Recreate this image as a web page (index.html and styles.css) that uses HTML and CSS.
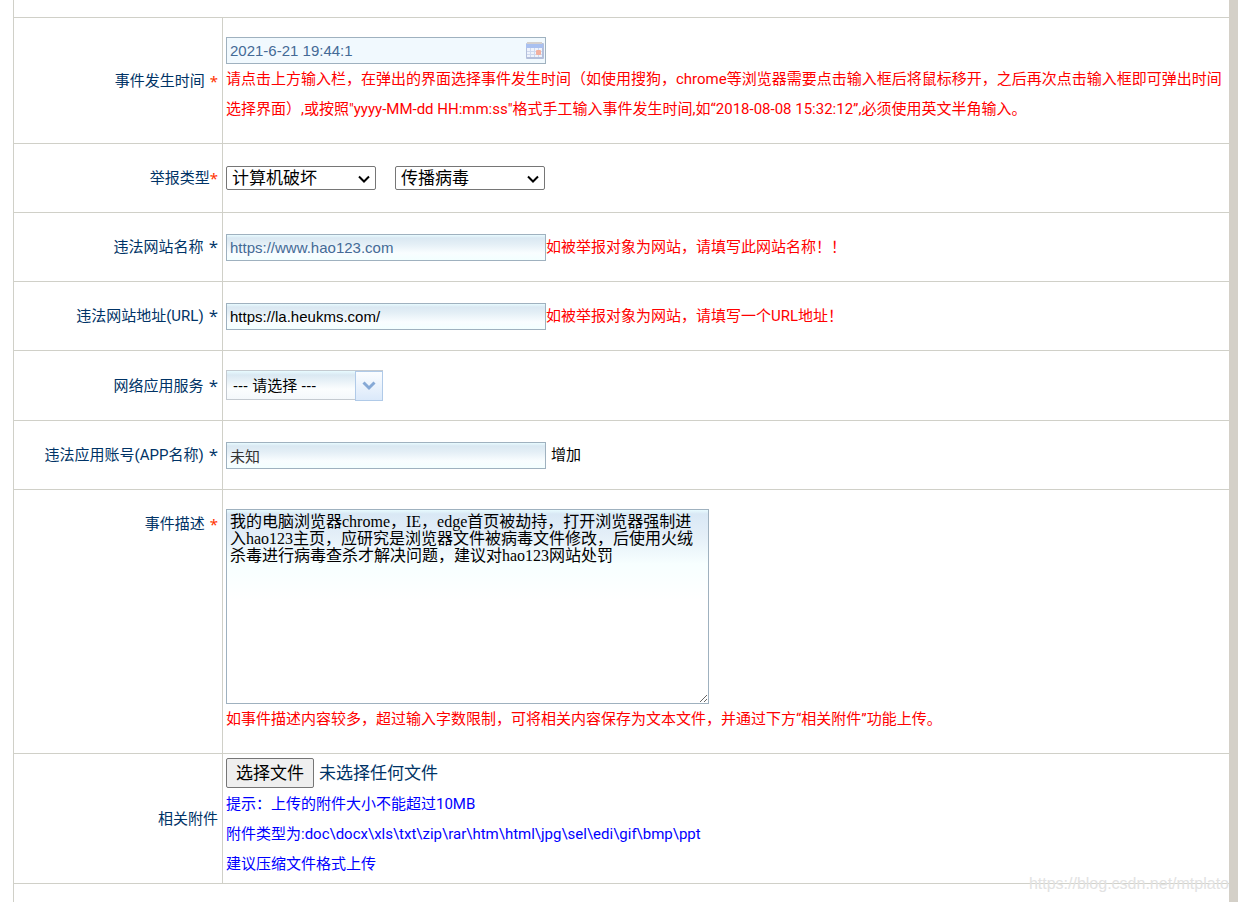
FILE: index.html
```html
<!DOCTYPE html>
<html lang="zh-CN">
<head>
<meta charset="utf-8">
<meta name="viewport" content="width=device-width, initial-scale=1">
<title>举报信息</title>
<link rel="stylesheet" href="styles.css">
</head>
<body>
<form class="report">
  <div class="spacer"></div>

  <div class="row">
    <div class="name"><label for="time">事件发生时间</label><span class="required">*</span></div>
    <div class="field stack">
      <div class="date-box">
        <input class="text date" id="time" type="text" value="2021-6-21 19:44:1">
        <svg class="calendar" viewBox="0 0 18 17" aria-hidden="true">
          <rect x="0" y="1" width="18" height="16" rx="1" fill="#b4bfdb"/>
          <rect x="1" y="0" width="15" height="2" fill="#d3cfce"/>
          <rect x="0" y="2" width="17" height="4" fill="#a9c0f0"/>
          <rect x="1" y="6" width="15" height="9" fill="#eff3fc"/>
          <path d="M4.500 6v9M8.500 6v9M12.500 6v9M1 9.500h15M1 12.500h15" stroke="#ced8ee" fill="none"/>
          <rect x="10" y="8" width="5" height="5" rx="1" fill="#f3b09f"/>
        </svg>
      </div>
      <p class="hint">请点击上方输入栏，在弹出的界面选择事件发生时间（如使用搜狗，chrome等浏览器需要点击输入框后将鼠标移开，之后再次点击输入框即可弹出时间选择界面）,或按照"yyyy-MM-dd HH:mm:ss"格式手工输入事件发生时间,如“2018-08-08 15:32:12”,必须使用英文半角输入。</p>
    </div>
  </div>

  <div class="row">
    <div class="name tight"><label for="type">举报类型</label><span class="required">*</span></div>
    <div class="field selects">
      <div class="pick-box">
        <select class="pick" id="type"><option>计算机破坏</option></select>
        <svg class="chevron" viewBox="0 0 12 8" aria-hidden="true"><path d="M1 1.500L6 6.500L11 1.500" fill="none" stroke="#000" stroke-width="2"/></svg>
      </div>
      <div class="pick-box">
        <select class="pick" aria-label="举报子类型"><option>传播病毒</option></select>
        <svg class="chevron" viewBox="0 0 12 8" aria-hidden="true"><path d="M1 1.500L6 6.500L11 1.500" fill="none" stroke="#000" stroke-width="2"/></svg>
      </div>
    </div>
  </div>

  <div class="row">
    <div class="name"><label for="site">违法网站名称</label><span class="star">*</span></div>
    <div class="field">
      <input class="text muted" id="site" type="text" value="https://www.hao123.com">
      <span class="hint">如被举报对象为网站，请填写此网站名称！！</span>
    </div>
  </div>

  <div class="row">
    <div class="name"><label for="url">违法网站地址(URL)</label><span class="star">*</span></div>
    <div class="field">
      <input class="text" id="url" type="text" value="https://la.heukms.com/">
      <span class="hint">如被举报对象为网站，请填写一个URL地址！</span>
    </div>
  </div>

  <div class="row">
    <div class="name"><label for="service">网络应用服务</label><span class="star">*</span></div>
    <div class="field">
      <div class="combo">
        <select class="combo-select" id="service"><option>--- 请选择 ---</option></select>
        <span class="combo-arrow"><svg viewBox="0 0 14 10" aria-hidden="true"><path d="M1.500 1.500L7 7L12.500 1.500" fill="none" stroke="#86a9d6" stroke-width="3"/></svg></span>
      </div>
    </div>
  </div>

  <div class="row">
    <div class="name"><label for="account">违法应用账号(APP名称)</label><span class="star">*</span></div>
    <div class="field">
      <input class="text dark" id="account" type="text" value="未知">
      <button class="add" type="button">增加</button>
    </div>
  </div>

  <div class="row">
    <div class="name top"><label for="detail">事件描述</label><span class="required">*</span></div>
    <div class="field stack">
      <textarea class="detail" id="detail" spellcheck="false">我的电脑浏览器chrome，IE，edge首页被劫持，打开浏览器强制进入hao123主页，应研究是浏览器文件被病毒文件修改，后使用火绒杀毒进行病毒查杀才解决问题，建议对hao123网站处罚</textarea>
      <p class="hint">如事件描述内容较多，超过输入字数限制，可将相关内容保存为文本文件，并通过下方“相关附件”功能上传。</p>
    </div>
  </div>

  <div class="row">
    <div class="name"><label for="file">相关附件</label></div>
    <div class="field stack files">
      <div class="file-line">
        <input class="file-input" id="file" type="file">
        <label class="file-button" for="file">选择文件</label>
        <span class="file-name">未选择任何文件</span>
      </div>
      <div class="tips">
        <p>提示：上传的附件大小不能超过10MB</p>
        <p>附件类型为:doc\docx\xls\txt\zip\rar\htm\html\jpg\sel\edi\gif\bmp\ppt</p>
        <p>建议压缩文件格式上传</p>
      </div>
    </div>
  </div>
</form>
<div class="watermark">https://blog.csdn.net/mtplato</div>
</body>
</html>
```
FILE: styles.css
```css
* {
  box-sizing: border-box;
}

body {
  margin: 0;
  min-height: 100vh;
  display: flex;
  position: relative;
  padding-left: 13px;
  border-right: 9px solid #d4d0c8;
  background: #fff;
  color: #003366;
  font: 15px/30px Roboto, "Noto Sans CJK SC", sans-serif;
}

p {
  margin: 0;
}

.report {
  flex: 1;
  border-left: 1px solid #d0d0c8;
}

.spacer {
  height: 18px;
  border-bottom: 1px solid #d0d0c8;
}

.row {
  display: grid;
  grid-template-columns: 209px 1fr;
  border-bottom: 1px solid #d0d0c8;
}

.name {
  display: flex;
  align-items: center;
  justify-content: flex-end;
  gap: 5px;
  padding: 19px 4px 19px 0;
  border-right: 1px solid #d0d0c8;
}

.name.tight {
  gap: 0;
}

.name.top {
  align-items: flex-start;
}

.required {
  color: #ff3300;
  font-family: "Noto Sans", sans-serif;
}

.star {
  font-family: "Open Sans", sans-serif;
  font-size: 17px;
}

.field {
  display: flex;
  align-items: center;
  padding: 19px 3px;
}

.field.stack {
  flex-direction: column;
  align-items: flex-start;
}

.hint {
  color: #f00;
}

.text {
  width: 320px;
  height: 27px;
  padding: 0 3px;
  border: 1px solid #9fb1bf;
  border-radius: 0;
  background: linear-gradient(#e8fbff, #dae8f2 3px, #e4eff6 9px, #f9fdff 18px, #f3ffff);
  color: #000;
  font: 15px "Liberation Sans", "Noto Sans CJK SC", sans-serif;
}

.text.date {
  display: block;
  background: #f1f9fe;
  color: #446a96;
}

.text.muted {
  color: #446a96;
}

.text.dark {
  color: #333;
}

.date-box {
  position: relative;
}

.calendar {
  position: absolute;
  top: 5px;
  right: 2px;
  width: 18px;
  height: 17px;
}

.selects {
  gap: 19px;
}

.pick-box {
  position: relative;
  width: 150px;
  height: 24px;
}

.pick {
  display: block;
  width: 100%;
  height: 24px;
  padding: 0 24px 0 5px;
  appearance: none;
  border: 1px solid #767676;
  border-radius: 2px;
  background-color: #fff;
  color: #000;
  font: 17px/22px Roboto, "Noto Sans CJK SC", sans-serif;
}

.chevron {
  position: absolute;
  top: 9px;
  right: 6px;
  width: 12px;
  height: 8px;
  pointer-events: none;
}

.combo {
  position: relative;
  width: 157px;
  height: 31px;
}

.combo-select {
  display: block;
  width: 100%;
  height: 30px;
  padding: 0 30px 0 6px;
  appearance: none;
  border: 1px solid #c4cad0;
  border-right: 0;
  border-radius: 0;
  background: linear-gradient(#e8fbff, #dae8f2 4px, #e8f1f7 10px, #fbfdfe 18px, #f4f8fb);
  color: #000;
  font: 15px "Liberation Sans", "Noto Sans CJK SC", sans-serif;
}

.combo-arrow {
  position: absolute;
  top: 1px;
  right: 0;
  bottom: 0;
  width: 28px;
  display: flex;
  align-items: center;
  justify-content: center;
  border: 1px solid #b0cae8;
  background: linear-gradient(#fbfdff, #dbe9fa);
  pointer-events: none;
}

.combo-arrow svg {
  width: 14px;
  height: 10px;
}

.add {
  padding: 0 5px;
  border: 0;
  background: none;
  color: #000;
  font: inherit;
}

.detail {
  display: block;
  width: 483px;
  max-width: 100%;
  height: 195px;
  padding: 3px;
  border: 1px solid #9fb1bf;
  background: linear-gradient(#e8fbff, #d9e8f5 4px, #e4eff8 26px, #f7ffff 54px, #fff 90px);
  color: #000;
  font: 16px/17px "Liberation Serif", "Noto Sans CJK SC", serif;
}

.files {
  gap: 1px;
  padding: 4px 3px;
}

.file-line {
  position: relative;
  display: flex;
  gap: 5px;
  font-size: 17px;
}

.file-input {
  position: absolute;
  width: 87px;
  height: 30px;
  opacity: 0;
}

.file-button {
  height: 30px;
  padding: 0 9px;
  border: 1px solid #767676;
  border-radius: 2px;
  background: #efefef;
  color: #000;
  line-height: 28px;
}

.tips {
  color: #00f;
}

.watermark {
  position: absolute;
  right: 0;
  bottom: 8px;
  color: #e2e2e2;
  font: 16px/20px "Liberation Sans", sans-serif;
  pointer-events: none;
}
```
